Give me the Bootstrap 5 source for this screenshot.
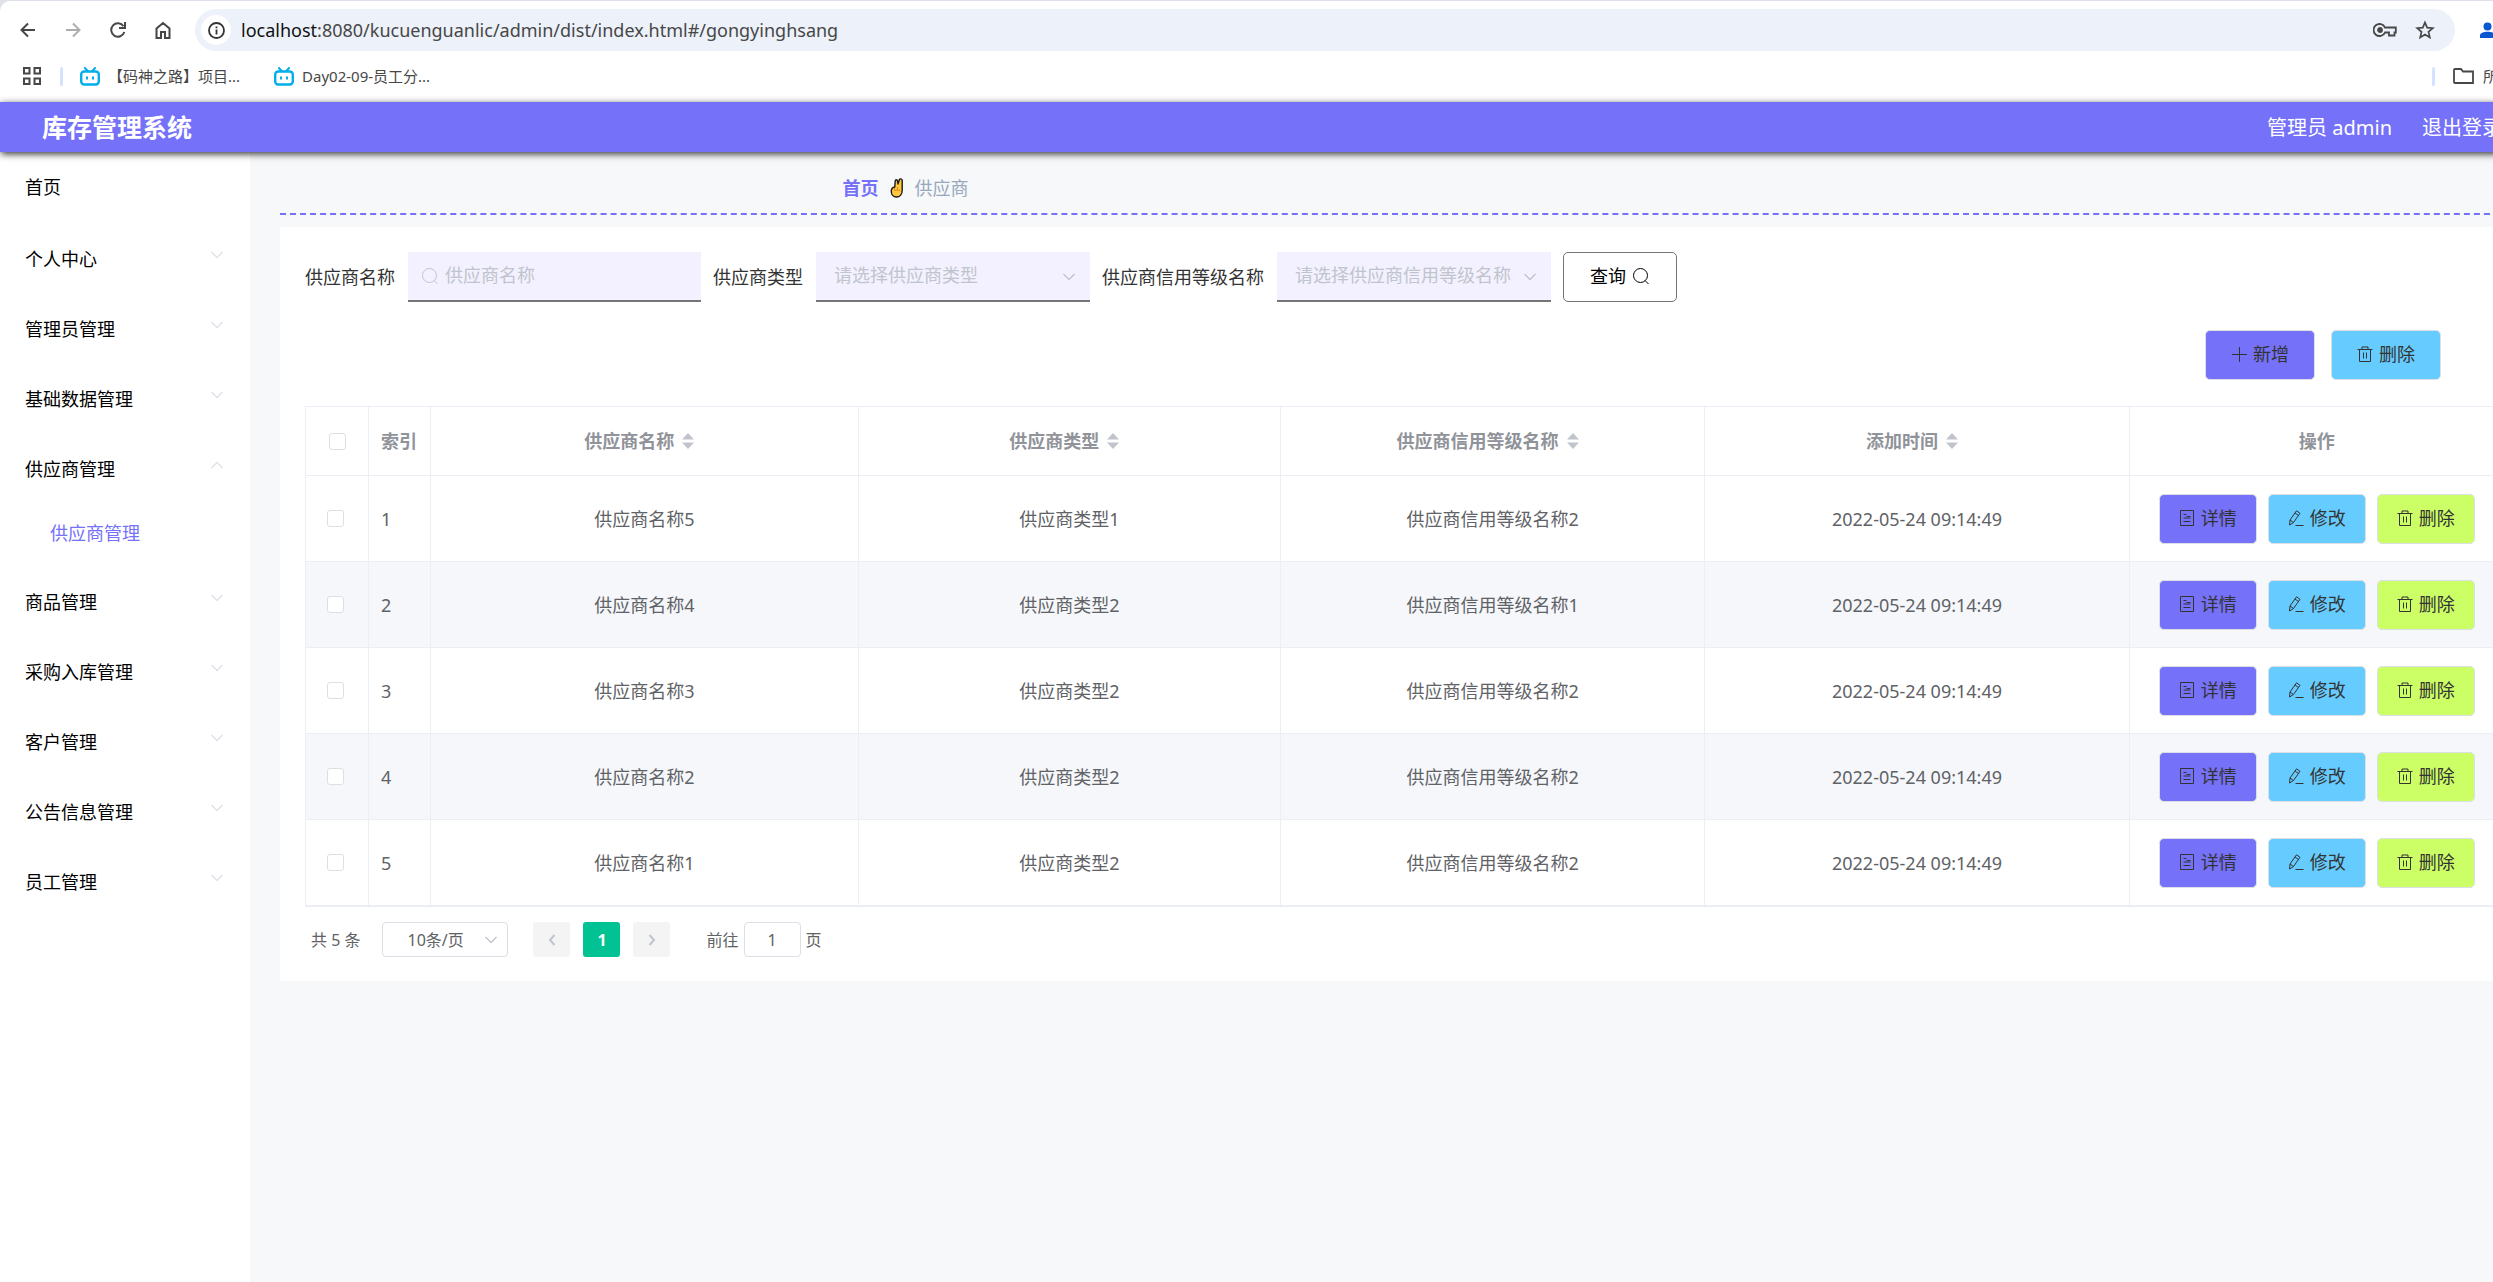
<!DOCTYPE html>
<html lang="zh-CN">
<head>
<meta charset="utf-8">
<meta name="viewport" content="width=device-width, initial-scale=1">
<title>库存管理系统</title>
<link href="https://cdn.jsdelivr.net/npm/bootstrap@5.3.0/dist/css/bootstrap.min.css" rel="stylesheet">
<style>
:root { --brand: #7571f9; --sky: #66ccff; --lime: #ccff66; --line: #ebeef5; --edge: #dcdfe6; --hint: #c0c4cc; }
body { font-family: "Noto Sans", "Noto Sans CJK SC", sans-serif; font-size: 18px; line-height: 24px; color: #333; background: #f7f8fa; min-height: 100vh; overflow: hidden; }
a { text-decoration: none; }
svg { display: block; flex: none; }
.ico { fill: none; stroke: currentColor; stroke-width: 1; }
/* the window runs a little past the right edge of the screen */
.wide-shell { width: calc(100% + 67px); min-height: 100vh; }

/* browser bars */
.browser-top { background: #dee1e9; padding-top: 1px; }
.browser-bars { background: #fff; border-top-left-radius: 10px; color: #474747; }
.tool-row { height: 58px; padding-left: 19px; padding-right: 60px; }
.tool-row button, .mark-row button { border: 0; background: none; padding: 0; color: inherit; }
.tool-nav { gap: 27px; }
.address-pill { height: 42px; border-radius: 21px; background: #ecf1fa; padding: 0 20px 0 6px; margin-left: 23px; gap: 10px; }
.info-dot { width: 30px; height: 30px; border-radius: 50%; background: #fff; color: #333; }
.address-pill .url-text { color: #474747; }
.url-text b { font-weight: 400; color: #111; }
.mark-row { height: 43px; padding: 0 17px 9px 23px; font-size: 15px; line-height: 20px; }
.mark-row a { color: #474747; }
.mark-links { gap: 34px; margin-left: 17px; }
.mark-sep { width: 3px; height: 19px; border-radius: 2px; background: #d3e3fd; }
.mark-sep.first { margin-left: 19px; }
.face { width: 25px; height: 25px; border-radius: 50%; background: #d3e3fd; margin-left: 20px; overflow: hidden; }

/* app header */
.app-header { height: 50px; background: var(--brand); color: #fff; padding: 0 58px 0 42px; box-shadow: 1px 2px 7px #333; position: relative; z-index: 2; }
.app-header h1 { font-size: 25px; line-height: 32px; font-weight: 700; margin: 0; }
.app-header .who { font-size: 20px; gap: 30px; padding-top: 2px; }
.app-header a { color: #fff; }

/* side menu */
.side-menu { width: 250px; background: #fff; flex: none; }
.side-menu a { color: #000; height: 70px; padding: 0 26px 0 25px; }
.side-menu .home-item { height: 72px; padding-bottom: 2px; }
.side-menu svg { color: #dfe1e8; margin-bottom: 8px; }
.side-menu .sub-menu { padding-bottom: 5px; }
.side-menu .sub-menu a { height: 58px; padding-left: 50px; color: var(--brand); }

/* content */
.main-area { padding: 0 30px; min-width: 0; }
.crumbs { height: 63px; padding: 12px 0 2px 25%; border-bottom: 2px dashed var(--brand); gap: 11px; color: #97a8be; }
.crumbs a { color: var(--brand); font-weight: 700; }
.panel { background: #fff; margin-top: 12px; padding: 25px 25px 24px; }
.search-line { gap: 12px; color: #333; }
.search-line .field { gap: 13px; }
.box { position: relative; color: var(--hint); }
.box > svg { position: absolute; pointer-events: none; }
.box .lens { left: 13px; top: 15px; }
.box .arrow { right: 14px; top: 21px; }
.box input, .box select { height: 50px; border: 0; border-bottom: 2px solid #757575; border-radius: 0; background: #f3f1ff; color: var(--hint); appearance: none; outline: 0; padding-top: 0; padding-bottom: 2px; }
.box input { width: 293px; padding-left: 37px; }
.box select { width: 274px; padding-left: 18px; }
.box input::placeholder { color: var(--hint); opacity: 1; }
.btn { --bs-btn-font-size: 18px; --bs-btn-line-height: 24px; --bs-btn-border-radius: 5px; display: inline-flex; align-items: center; justify-content: center; height: 50px; padding: 0 0 2px; gap: 6px; }
.btn-query { width: 114px; background: #fff; border: 1px solid #757575; color: #000; }
.btn-tool { border: 1px solid var(--edge); color: #333; width: 98px; }
.btn-wide { width: 110px; }
.bg-brand { background: var(--brand); }
.bg-sky { background: var(--sky); }
.bg-lime { background: var(--lime); }
.actions { margin: 28px 0 26px; padding-right: 64px; gap: 16px; }

.list-table { table-layout: fixed; width: 100%; border-collapse: separate; border-spacing: 0; border-left: 1px solid var(--line); border-top: 1px solid var(--line); border-bottom: 1px solid var(--line); color: #606266; }
.list-table th, .list-table td { border-right: 1px solid var(--line); border-bottom: 1px solid var(--line); text-align: center; padding: 0; }
.list-table th { height: 69px; color: #909399; font-weight: 700; }
.list-table td { height: 86px; }
.list-table tbody tr:nth-child(even) { background: #f5f7fb; }
.list-table .num { text-align: left; padding-left: 12px; }
.list-table .pick { padding-right: 4px; }
.tick { appearance: none; width: 17px; height: 17px; border: 1px solid var(--edge); border-radius: 3px; background: #fff; display: block; margin: 0 auto; }
.sort { display: inline-flex; align-items: center; gap: 8px; margin-right: 10px; }
.sort svg { fill: var(--hint); }
.row-tools { display: flex; justify-content: center; gap: 11px; }

.pager { font-size: 16px; padding: 15px 6px 0; color: #606266; }
.pager .total { margin-right: 22px; }
.pager .box select { width: 126px; height: 35px; padding: 0 0 0 24px; border: 1px solid var(--edge); border-radius: 4px; background: #fff; color: #606266; font-size: 16px; }
.pager .box .arrow { top: 14px; right: 10px; }
.pager button { width: 37px; height: 35px; border: 0; border-radius: 3px; background: #f4f4f5; color: var(--hint); padding: 0; }
.pager button.now { background: #00c292; color: #fff; font-weight: 700; }
.pager .steps { gap: 13px; margin: 0 36px 0 25px; }
.pager .goto { width: 57px; height: 35px; border: 1px solid var(--edge); border-radius: 4px; text-align: center; color: #606266; margin: 0 5px; }
</style>
<script src="https://cdn.jsdelivr.net/npm/bootstrap@5.3.0/dist/js/bootstrap.bundle.min.js"></script>
</head>
<body>
<svg width="0" height="0" class="position-absolute" aria-hidden="true">
  <symbol id="i-down" viewBox="0 0 14 8"><path d="M1.500 1l5.500 5.500L12.500 1" stroke-width="1.300"/></symbol>
  <symbol id="i-up" viewBox="0 0 14 8"><path d="M1.500 7L7 1.500 12.500 7" stroke-width="1.300"/></symbol>
  <symbol id="i-lens" viewBox="0 0 18 18"><circle cx="8.500" cy="8.500" r="7"/><path d="M13 13.500l3.500 3.500"/></symbol>
  <symbol id="i-bin" viewBox="0 0 16 16"><path d="M.5 3.500h15M5 3.500V1h6v2.500M2.500 3.500v12h11v-12M6.500 6.500v6M9.500 6.500v6"/></symbol>
  <symbol id="i-doc" viewBox="0 0 16 16"><path d="M1.500.5h13v15h-13zM4.500 4.500h3M4.500 8h7M7.500 6.500h4M4.500 11.500h7"/></symbol>
  <symbol id="i-pen" viewBox="0 0 16 16"><path d="M2 10L8.500.800l3.500 2.500L5.500 12.500 1.500 15zM7 3l3.500 2.500M2 10l3.500 2.500M7.500 15.500H15.500"/></symbol>
  <symbol id="i-sort" viewBox="0 0 12 16"><path d="M6 0l6 6.500H0zM6 16l6-6.500H0z"/></symbol>
  <symbol id="i-tv" viewBox="0 0 20 19"><path d="M5 1l3 3.500M15 1l-3 3.500" stroke="#00aeec" stroke-width="2" stroke-linecap="round"/><rect x="1.200" y="4.500" width="17.600" height="13" rx="3" fill="#fff" stroke="#00aeec" stroke-width="2.400"/><path d="M7 9.500v3M13 9.500v3" stroke="#00aeec" stroke-width="2"/></symbol>
</svg>

<div class="wide-shell d-flex flex-column">
  <div class="browser-top">
    <div class="browser-bars">
      <div class="tool-row d-flex align-items-center">
        <div class="tool-nav d-flex align-items-center">
          <button type="button" aria-label="后退"><svg width="18" height="18" viewBox="0 0 18 18" fill="none" stroke="currentColor" stroke-width="2"><path d="M16 9H3M9 2.500L2.500 9 9 15.500"/></svg></button>
          <button type="button" aria-label="前进"><svg width="18" height="18" viewBox="0 0 18 18" fill="none" stroke="#adadad" stroke-width="2"><path d="M2 9h13M9 2.500L15.500 9 9 15.500"/></svg></button>
          <button type="button" aria-label="刷新"><svg width="18" height="18" viewBox="0 0 18 18" fill="none" stroke="currentColor" stroke-width="2"><path d="M15.300 11A6.700 6.700 0 1 1 14.500 5.300M16 1v6h-6"/></svg></button>
          <button type="button" aria-label="主页"><svg width="18" height="18" viewBox="0 0 18 18" fill="none" stroke="currentColor" stroke-width="2"><path d="M2.500 17V7.500L9 2l6.500 5.500V17h-4.500v-6H7v6z"/></svg></button>
        </div>
        <div class="address-pill d-flex align-items-center flex-grow-1">
          <span class="info-dot d-flex align-items-center justify-content-center"><svg width="17" height="17" viewBox="0 0 17 17" fill="none" stroke="currentColor" stroke-width="1.800"><circle cx="8.500" cy="8.500" r="7.500"/><path d="M8.500 7.500V12.500M8.500 4.500v1.800"/></svg></span>
          <span class="url-text flex-grow-1"><b>localhost</b>:8080/kucuenguanlic/admin/dist/index.html#/gongyinghsang</span>
          <button type="button" aria-label="密码"><svg width="24" height="16" viewBox="0 0 24 16" fill="none" stroke="currentColor" stroke-width="1.800"><path d="M12 5.500A6 6 0 1 0 12 10.500H16V13.500H21.500V10.500H22.800V5.500z"/><circle cx="7" cy="8" r="2" fill="currentColor"/></svg></button>
          <button type="button" aria-label="收藏" class="ms-2"><svg width="20" height="20" viewBox="0 0 20 20" fill="none" stroke="currentColor" stroke-width="1.700"><path d="M10 2.500l2.200 5.200 5.600.5-4.300 3.700 1.300 5.500L10 14.500l-4.800 2.900 1.300-5.500L2.200 8.200l5.600-.5z"/></svg></button>
        </div>
        <button type="button" class="face" aria-label="用户"><svg width="25" height="25" viewBox="0 0 25 25" fill="#0b57d0"><circle cx="12.500" cy="8.500" r="4"/><path d="M5 20v-2.500c0-5 15-5 15 0V20z"/></svg></button>
      </div>
      <div class="mark-row d-flex align-items-center">
        <button type="button" aria-label="标签页分组"><svg width="18" height="18" viewBox="0 0 18 18" fill="none" stroke="currentColor" stroke-width="2"><path d="M1 1h5.500v5.500H1zM11.500 1H17v5.500h-5.500zM1 11.500h5.500V17H1zM11.500 11.500H17V17h-5.500z"/></svg></button>
        <span class="mark-sep first"></span>
        <div class="mark-links d-flex">
          <a href="#" class="d-flex align-items-center gap-2"><svg width="20" height="19"><use href="#i-tv"/></svg>【码神之路】项目...</a>
          <a href="#" class="d-flex align-items-center gap-2"><svg width="20" height="19"><use href="#i-tv"/></svg>Day02-09-员工分...</a>
        </div>
        <span class="mark-sep ms-auto me-3"></span>
        <a href="#" class="d-flex align-items-center gap-2 text-nowrap"><svg width="24" height="16" viewBox="0 0 24 16" fill="none" stroke="#474747" stroke-width="1.800"><path d="M4 1h6l2 2.500h10V15H4a1 1 0 0 1-1-1V2a1 1 0 0 1 1-1z"/></svg>所有书签</a>
      </div>
    </div>
  </div>

  <header class="app-header d-flex align-items-center justify-content-between">
    <h1>库存管理系统</h1>
    <div class="who d-flex align-items-center"><span>管理员 admin</span><a href="#">退出登录</a></div>
  </header>

  <div class="d-flex flex-grow-1">
    <nav class="side-menu">
      <ul class="list-unstyled m-0">
        <li><a href="#" class="home-item d-flex align-items-center">首页</a></li>
        <li><a href="#" class="d-flex align-items-center justify-content-between">个人中心<svg class="ico" width="14" height="8"><use href="#i-down"/></svg></a></li>
        <li><a href="#" class="d-flex align-items-center justify-content-between">管理员管理<svg class="ico" width="14" height="8"><use href="#i-down"/></svg></a></li>
        <li><a href="#" class="d-flex align-items-center justify-content-between">基础数据管理<svg class="ico" width="14" height="8"><use href="#i-down"/></svg></a></li>
        <li><a href="#" class="d-flex align-items-center justify-content-between">供应商管理<svg class="ico" width="14" height="8"><use href="#i-up"/></svg></a>
          <ul class="sub-menu list-unstyled"><li><a href="#" class="d-flex align-items-center">供应商管理</a></li></ul></li>
        <li><a href="#" class="d-flex align-items-center justify-content-between">商品管理<svg class="ico" width="14" height="8"><use href="#i-down"/></svg></a></li>
        <li><a href="#" class="d-flex align-items-center justify-content-between">采购入库管理<svg class="ico" width="14" height="8"><use href="#i-down"/></svg></a></li>
        <li><a href="#" class="d-flex align-items-center justify-content-between">客户管理<svg class="ico" width="14" height="8"><use href="#i-down"/></svg></a></li>
        <li><a href="#" class="d-flex align-items-center justify-content-between">公告信息管理<svg class="ico" width="14" height="8"><use href="#i-down"/></svg></a></li>
        <li><a href="#" class="d-flex align-items-center justify-content-between">员工管理<svg class="ico" width="14" height="8"><use href="#i-down"/></svg></a></li>
      </ul>
    </nav>

    <main class="main-area flex-grow-1">
      <nav class="crumbs d-flex align-items-center" aria-label="面包屑">
        <a href="#">首页</a>
        <svg width="14" height="20" viewBox="0 0 14 20" stroke="#1a1a1a" stroke-width="1.400" stroke-linejoin="round" fill="#ffc83d"><path d="M4.800 9L5.200 3c.2-1.600 2-1.600 2.300 0L8 6 9.300 1.700c.5-1.300 2.800-1 2.900.6V12c0 4-2.200 7-5.700 7C3.300 19 1.300 16.500 1.300 13.500 1.300 11 2.300 9.200 4.800 9z"/><path d="M4.500 12.500c2-.8 4-.5 6 .3M4.500 10v2.500M7.500 9v3.500" fill="none" stroke="#e08a1e" stroke-width="1"/></svg>
        <span>供应商</span>
      </nav>

      <section class="panel">
        <form class="search-line d-flex align-items-center">
          <div class="field d-flex align-items-center">
            <label for="q-name">供应商名称</label>
            <div class="box"><input id="q-name" type="text" placeholder="供应商名称"><svg class="ico lens" width="18" height="18"><use href="#i-lens"/></svg></div>
          </div>
          <div class="field d-flex align-items-center">
            <label for="q-type">供应商类型</label>
            <div class="box"><select id="q-type"><option>请选择供应商类型</option></select><svg class="ico arrow" width="14" height="8"><use href="#i-down"/></svg></div>
          </div>
          <div class="field d-flex align-items-center">
            <label for="q-level">供应商信用等级名称</label>
            <div class="box"><select id="q-level"><option>请选择供应商信用等级名称</option></select><svg class="ico arrow" width="14" height="8"><use href="#i-down"/></svg></div>
          </div>
          <button type="button" class="btn btn-query">查询<svg class="ico" width="18" height="18"><use href="#i-lens"/></svg></button>
        </form>

        <div class="actions d-flex justify-content-end">
          <button type="button" class="btn btn-tool btn-wide bg-brand"><svg class="ico" width="16" height="16" viewBox="0 0 16 16"><path d="M8.500 1v15M1 8.500h15"/></svg>新增</button>
          <button type="button" class="btn btn-tool btn-wide bg-sky"><svg class="ico" width="16" height="16"><use href="#i-bin"/></svg>删除</button>
        </div>

        <table class="list-table">
          <colgroup><col style="width:63px"><col style="width:62px"><col style="width:19.450%"><col style="width:19.200%"><col style="width:19.300%"><col style="width:19.300%"><col></colgroup>
          <thead>
            <tr>
              <th><input type="checkbox" class="tick" aria-label="全选"></th>
              <th class="num">索引</th>
              <th><span class="sort">供应商名称<svg width="12" height="16"><use href="#i-sort"/></svg></span></th>
              <th><span class="sort">供应商类型<svg width="12" height="16"><use href="#i-sort"/></svg></span></th>
              <th><span class="sort">供应商信用等级名称<svg width="12" height="16"><use href="#i-sort"/></svg></span></th>
              <th><span class="sort">添加时间<svg width="12" height="16"><use href="#i-sort"/></svg></span></th>
              <th>操作</th>
            </tr>
          </thead>
          <tbody>
            <tr>
              <td class="pick"><input type="checkbox" class="tick" aria-label="选择第1行"></td><td class="num">1</td><td>供应商名称5</td><td>供应商类型1</td><td>供应商信用等级名称2</td><td>2022-05-24 09:14:49</td>
              <td><div class="row-tools"><button type="button" class="btn btn-tool bg-brand"><svg class="ico" width="16" height="16"><use href="#i-doc"/></svg>详情</button><button type="button" class="btn btn-tool bg-sky"><svg class="ico" width="16" height="16"><use href="#i-pen"/></svg>修改</button><button type="button" class="btn btn-tool bg-lime"><svg class="ico" width="16" height="16"><use href="#i-bin"/></svg>删除</button></div></td>
            </tr>
            <tr>
              <td class="pick"><input type="checkbox" class="tick" aria-label="选择第2行"></td><td class="num">2</td><td>供应商名称4</td><td>供应商类型2</td><td>供应商信用等级名称1</td><td>2022-05-24 09:14:49</td>
              <td><div class="row-tools"><button type="button" class="btn btn-tool bg-brand"><svg class="ico" width="16" height="16"><use href="#i-doc"/></svg>详情</button><button type="button" class="btn btn-tool bg-sky"><svg class="ico" width="16" height="16"><use href="#i-pen"/></svg>修改</button><button type="button" class="btn btn-tool bg-lime"><svg class="ico" width="16" height="16"><use href="#i-bin"/></svg>删除</button></div></td>
            </tr>
            <tr>
              <td class="pick"><input type="checkbox" class="tick" aria-label="选择第3行"></td><td class="num">3</td><td>供应商名称3</td><td>供应商类型2</td><td>供应商信用等级名称2</td><td>2022-05-24 09:14:49</td>
              <td><div class="row-tools"><button type="button" class="btn btn-tool bg-brand"><svg class="ico" width="16" height="16"><use href="#i-doc"/></svg>详情</button><button type="button" class="btn btn-tool bg-sky"><svg class="ico" width="16" height="16"><use href="#i-pen"/></svg>修改</button><button type="button" class="btn btn-tool bg-lime"><svg class="ico" width="16" height="16"><use href="#i-bin"/></svg>删除</button></div></td>
            </tr>
            <tr>
              <td class="pick"><input type="checkbox" class="tick" aria-label="选择第4行"></td><td class="num">4</td><td>供应商名称2</td><td>供应商类型2</td><td>供应商信用等级名称2</td><td>2022-05-24 09:14:49</td>
              <td><div class="row-tools"><button type="button" class="btn btn-tool bg-brand"><svg class="ico" width="16" height="16"><use href="#i-doc"/></svg>详情</button><button type="button" class="btn btn-tool bg-sky"><svg class="ico" width="16" height="16"><use href="#i-pen"/></svg>修改</button><button type="button" class="btn btn-tool bg-lime"><svg class="ico" width="16" height="16"><use href="#i-bin"/></svg>删除</button></div></td>
            </tr>
            <tr>
              <td class="pick"><input type="checkbox" class="tick" aria-label="选择第5行"></td><td class="num">5</td><td>供应商名称1</td><td>供应商类型2</td><td>供应商信用等级名称2</td><td>2022-05-24 09:14:49</td>
              <td><div class="row-tools"><button type="button" class="btn btn-tool bg-brand"><svg class="ico" width="16" height="16"><use href="#i-doc"/></svg>详情</button><button type="button" class="btn btn-tool bg-sky"><svg class="ico" width="16" height="16"><use href="#i-pen"/></svg>修改</button><button type="button" class="btn btn-tool bg-lime"><svg class="ico" width="16" height="16"><use href="#i-bin"/></svg>删除</button></div></td>
            </tr>
          </tbody>
        </table>

        <div class="pager d-flex align-items-center">
          <span class="total">共 5 条</span>
          <div class="box"><select aria-label="每页条数"><option>10条/页</option></select><svg class="ico arrow" width="14" height="8"><use href="#i-down"/></svg></div>
          <div class="steps d-flex">
            <button type="button" class="d-flex align-items-center justify-content-center" aria-label="上一页"><svg width="8" height="12" viewBox="0 0 8 12" fill="none" stroke="currentColor" stroke-width="2"><path d="M6.500 1L2 6l4.500 5"/></svg></button>
            <button type="button" class="now">1</button>
            <button type="button" class="d-flex align-items-center justify-content-center" aria-label="下一页"><svg width="8" height="12" viewBox="0 0 8 12" fill="none" stroke="currentColor" stroke-width="2"><path d="M1.500 1L6 6l-4.500 5"/></svg></button>
          </div>
          <label for="goto-page">前往</label><input id="goto-page" class="goto" type="text" value="1"><span>页</span>
        </div>
      </section>
    </main>
  </div>
</div>
</body>
</html>
